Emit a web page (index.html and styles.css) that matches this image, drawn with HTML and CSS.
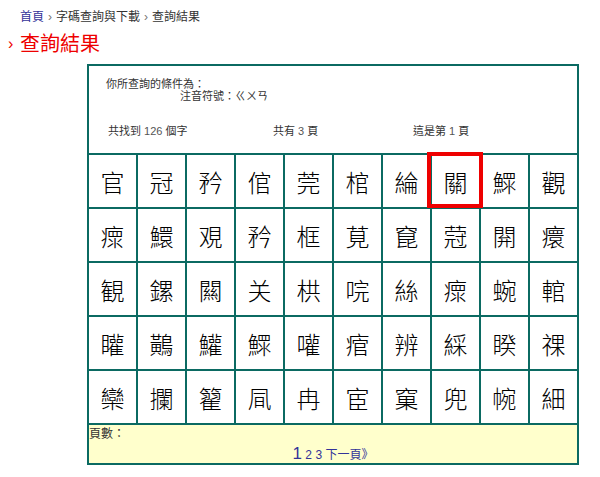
FILE: index.html
```html
<!DOCTYPE html>
<html lang="zh-Hant">
<head>
<meta charset="utf-8">
<title>查詢結果</title>
<link rel="stylesheet" href="styles.css">
</head>
<body>
<nav class="crumbs"><a class="crumb-link" href="#">首頁</a><span class="sep">›</span>字碼查詢與下載<span class="sep">›</span>查詢結果</nav>
<h1 class="title"><span class="chev">›</span>查詢結果</h1>
<div class="board">
  <div class="head">
    <div class="cond-1">你所查詢的條件為：</div>
    <div class="cond-2">注音符號：ㄍㄨㄢ</div>
    <div class="stats">
      <span>共找到 <span class="num">126</span> 個字</span>
      <span>共有 <span class="num">3</span> 頁</span>
      <span>這是第 <span class="num">1</span> 頁</span>
    </div>
  </div>
  <div class="cell">官</div><div class="cell">冠</div><div class="cell">矜</div><div class="cell">倌</div><div class="cell">莞</div><div class="cell">棺</div><div class="cell">綸</div><div class="cell cell-hit">關</div><div class="cell">鰥</div><div class="cell">觀</div>
  <div class="cell">瘝</div><div class="cell">鱞</div><div class="cell">覌</div><div class="cell">矜</div><div class="cell">框</div><div class="cell">莧</div><div class="cell">窤</div><div class="cell">蒄</div><div class="cell">閞</div><div class="cell">癏</div>
  <div class="cell">観</div><div class="cell">鏍</div><div class="cell">闗</div><div class="cell">关</div><div class="cell">栱</div><div class="cell">唍</div><div class="cell">絲</div><div class="cell">瘝</div><div class="cell">蜿</div><div class="cell">輨</div>
  <div class="cell">矔</div><div class="cell">鷬</div><div class="cell">鱹</div><div class="cell">鰥</div><div class="cell">嚾</div><div class="cell">痯</div><div class="cell">辨</div><div class="cell">綵</div><div class="cell">睽</div><div class="cell">祼</div>
  <div class="cell">欒</div><div class="cell">攔</div><div class="cell">籊</div><div class="cell">凬</div><div class="cell">冉</div><div class="cell">宦</div><div class="cell">窠</div><div class="cell">兜</div><div class="cell">帵</div><div class="cell">細</div>
  <div class="foot">
    <div class="foot-label">頁數：</div>
    <div class="pager"><span class="page-cur">1</span> <a class="page" href="#">2</a> <a class="page" href="#">3</a> <a class="page" href="#">下一頁》</a></div>
  </div>
</div>
</body>
</html>
```
FILE: styles.css
```css
body {
  margin: 0;
  font-family: "Liberation Sans", "Noto Sans CJK TC", sans-serif;
  color: #333;
  background: #fff;
}
.crumbs {
  padding: 10px 0 0 20px;
  font-size: 12px;
  line-height: 14px;
  color: #333;
}
.crumb-link {
  color: #333399;
  text-decoration: none;
}
.sep {
  color: #777;
  margin: 0 4px;
}
.title {
  margin: 8px 0 8px 8px;
  font-size: 20px;
  line-height: 24px;
  font-weight: normal;
  color: #e00;
}
.chev {
  display: inline-block;
  width: 12px;
  font-size: 16px;
  vertical-align: 2px;
}
.board {
  margin-left: 87px;
  display: grid;
  grid-template-columns: repeat(10, 47px);
  grid-template-rows: 87px repeat(5, 52px) 38px;
  gap: 2px;
  width: max-content;
  background: #0b6a62;
  border: 2px solid #0b6a62;
}
.head {
  grid-column: 1 / -1;
  background: #fff;
  box-sizing: border-box;
  padding-top: 12px;
  font-size: 11px;
  line-height: 13px;
  color: #333;
}
.cond-1 { padding-left: 17px; }
.cond-2 { padding-left: 91px; margin-top: -1px; }
.stats {
  margin-top: 22px;
  padding-left: 19px;
  display: grid;
  grid-template-columns: 165px 140px auto;
}
.num { color: #555; }
.cell {
  background: #fff;
  display: flex;
  align-items: center;
  justify-content: center;
  font-family: "Noto Sans CJK TC", sans-serif;
  font-size: 24px;
  font-weight: 300;
  color: #000;
}
.cell-hit { position: relative; }
.cell-hit::after {
  content: "";
  position: absolute;
  left: -5px;
  top: -3px;
  width: 56px;
  height: 56px;
  box-sizing: border-box;
  border: 4px solid #e00;
}
.foot {
  grid-column: 1 / -1;
  background: #ffffcc;
  box-sizing: border-box;
  padding-top: 2px;
  font-size: 12px;
  color: #333;
}
.foot-label {
  line-height: 14px;
}
.pager {
  margin-top: 4px;
  text-align: center;
  line-height: 18px;
  color: #333399;
}
.page-cur {
  font-size: 17px;
  color: #333399;
}
.page {
  color: #333399;
  text-decoration: none;
}
```
